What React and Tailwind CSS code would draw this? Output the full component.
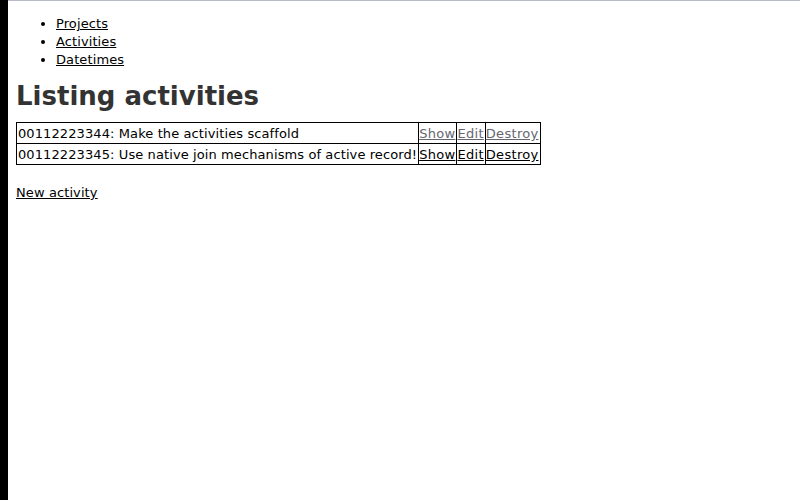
export default function App() {
  const rows = [
    { text: "00112223344: Make the activities scaffold", visited: true },
    { text: "00112223345: Use native join mechanisms of active record!", visited: false },
  ];
  return (
    <div className="flex h-[500px] w-[800px] bg-white text-[13px] leading-[18px] tracking-[0.1px] text-black" style={{ fontFamily: '"DejaVu Sans", Verdana, sans-serif' }}>
      <div className="w-2 shrink-0 bg-black" />
      <div className="flex-1 border-t border-[#b8bcc8] px-2">
        <ul className="mt-[14px] list-disc pl-10">
          <li><a href="#" className="underline">Projects</a></li>
          <li><a href="#" className="underline">Activities</a></li>
          <li><a href="#" className="underline">Datetimes</a></li>
        </ul>
        <h1 className="mt-[11px] text-[26px] font-bold leading-[32px] tracking-normal text-[#333]">Listing activities</h1>
        <table className="mt-[10px] border-collapse border border-black">
          <tbody>
            {rows.map((r, i) => (
              <tr key={i}>
                <td className="border border-black px-px pt-[2px] pb-0">{r.text}</td>
                {["Show", "Edit", "Destroy"].map((l) => (
                  <td key={l} className="border border-black pl-0 pr-px pt-[2px] pb-0 tracking-[0.3px]">
                    <a href="#" className={"underline " + (r.visited ? "text-[#666670]" : "text-black")}>{l}</a>
                  </td>
                ))}
              </tr>
            ))}
          </tbody>
        </table>
        <p className="mt-[19px]"><a href="#" className="underline">New activity</a></p>
      </div>
    </div>
  );
}
